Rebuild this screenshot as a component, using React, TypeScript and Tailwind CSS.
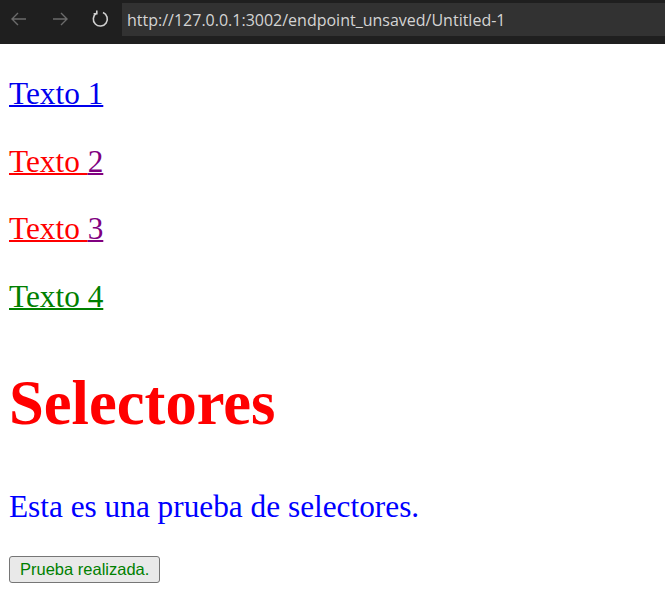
import React from "react";

function Toolbar() {
  return (
    <div className="flex h-[44px] items-start bg-[#1f1f1f]">
      <div className="flex h-[38px] items-center">
        <svg className="ml-[9px]" width="20" height="20" viewBox="0 0 20 20" fill="none" stroke="#6b6b6b" strokeWidth="1.4">
          <path d="M17 10H3M9 4l-6 6 6 6" />
        </svg>
        <svg className="ml-[21px]" width="20" height="20" viewBox="0 0 20 20" fill="none" stroke="#6b6b6b" strokeWidth="1.4">
          <path d="M3 10h14M11 4l6 6-6 6" />
        </svg>
        <svg className="ml-[20px]" width="20" height="20" viewBox="0 0 20 20" fill="none" stroke="#d0d0d0" strokeWidth="1.6">
          <path d="M6.5 4.2A7 7 0 1 0 13 3.6" />
          <path d="M6.8 1.5v3.2H3.6" />
        </svg>
      </div>
      <div className="ml-[12px] mt-[3px] flex h-[33px] flex-1 items-center bg-[#323232] pl-[5px] text-[16px] text-[#d4d4d4] [font-family:'Open_Sans','Noto_Sans',sans-serif]">
        http://127.0.0.1:3002/endpoint_unsaved/Untitled-1
      </div>
    </div>
  );
}

export default function App() {
  return (
    <div className="min-h-[596px] bg-white">
      <Toolbar />
      <div className="px-[9px] py-[1px] text-[31.3px] leading-[36.6px] [font-family:'Liberation_Serif','Times_New_Roman',serif]">
        <p className="mt-[31px] mb-[31px]">
          <a href="#" className="text-[#0000ee] underline decoration-2">Texto 1</a>
        </p>
        <p className="my-[31px]">
          <a href="#">
            <span className="text-[#ff0000] underline decoration-2">Texto </span>
            <span className="text-[#800080] underline decoration-2">2</span>
          </a>
        </p>
        <p className="my-[31px]">
          <a href="#">
            <span className="text-[#ff0000] underline decoration-2">Texto </span>
            <span className="text-[#800080] underline decoration-2">3</span>
          </a>
        </p>
        <p className="my-[31px]">
          <a href="#" className="text-[#008000] underline decoration-2">Texto 4</a>
        </p>
        <h1 className="mt-[52px] mb-[42px] text-[62.6px] font-bold leading-[72px] text-[#ff0000]">Selectores</h1>
        <p className="mt-[50px] mb-[30px] text-[#0000ff]">Esta es una prueba de selectores.</p>
        <button className="flex h-[27px] items-center rounded-[3px] border border-[#767676] bg-[#e9e9e9] px-[10px] text-[16.5px] text-[#008000] [font-family:'Liberation_Sans',Arial,sans-serif]">
          Prueba realizada.
        </button>
      </div>
    </div>
  );
}
